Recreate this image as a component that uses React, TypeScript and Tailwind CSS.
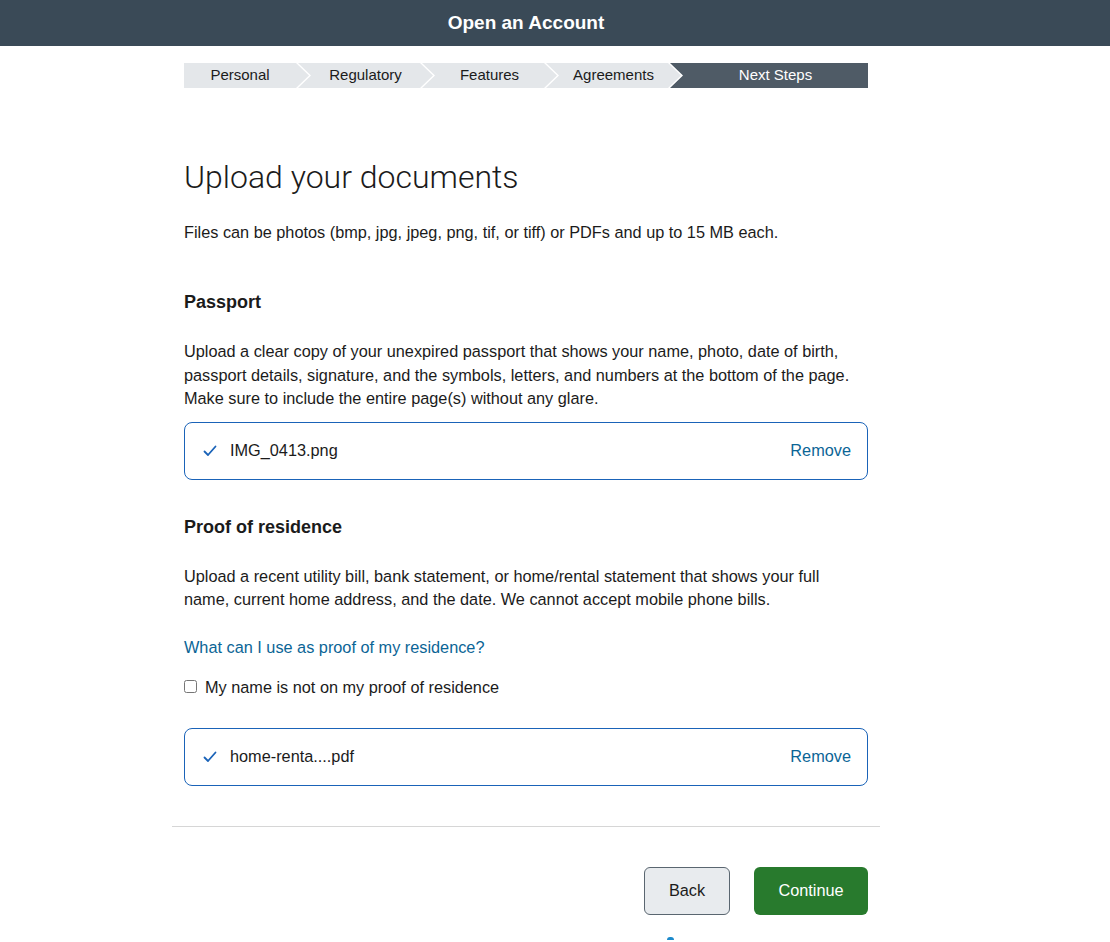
import React from "react";

const steps = ["Personal", "Regulatory", "Features", "Agreements", "Next Steps"];

// Arrow-shaped stepper segments
const Stepper = () => {
  return (
    <div className="flex h-[25px] w-full pt-[1px] text-[15px]">
      {steps.map((label, i) => {
        const first = i === 0;
        const last = i === steps.length - 1;
        const clip = first
          ? "[clip-path:polygon(0_0,calc(100%-13px)_0,100%_50%,calc(100%-13px)_100%,0_100%)]"
          : last
            ? "[clip-path:polygon(0_0,100%_0,100%_100%,0_100%,13px_50%)]"
            : "[clip-path:polygon(0_0,calc(100%-13px)_0,100%_50%,calc(100%-13px)_100%,0_100%,13px_50%)]";
        return (
          <div
            key={label}
            className={`flex h-[25px] items-center justify-center ${clip} ${
              first ? "w-[125px] pr-[13px]" : last ? "-ml-[11px] flex-1 pl-[13px]" : "-ml-[11px] w-[135px] px-[13px]"
            } ${last ? "bg-[#4f5b66] text-white" : "bg-[#e4e7ea] text-[#1b1b1b]"}`}
          >
            {label}
          </div>
        );
      })}
    </div>
  );
};

const Check = () => (
  <svg width="14" height="12" viewBox="0 0 14 12" fill="none">
    <path d="M1.5 6.5 L5 10 L12.5 1.5" stroke="#1a63b8" strokeWidth="1.8" strokeLinecap="round" strokeLinejoin="round" />
  </svg>
);

const FileRow = ({ name }: { name: string }) => (
  <div className="flex h-[58px] items-center rounded-[8px] border border-[#1a63b8] pl-[18px] pr-[16px]">
    <Check />
    <span className="ml-[13px] flex-1 text-[16.3px] text-[#1b1b1b]">{name}</span>
    <button className="text-[16.3px] text-[#0b6596]">Remove</button>
  </div>
);

export default function App() {
  return (
    <div className="min-h-[942px] bg-white font-['Liberation_Sans',Arial,sans-serif] text-[#1b1b1b]">
      <header className="h-[46px] bg-[#3a4a57]">
        <div className="flex h-full w-[1052px] items-center justify-center">
          <h1 className="text-[19px] font-bold text-white">Open an Account</h1>
        </div>
      </header>

      <div className="w-[1052px]">
        <div className="mx-auto w-[684px] pt-[16px] text-[16.3px]">
          <Stepper />

          <h2 className="mt-[70px] font-['Roboto',sans-serif] text-[32px] font-light leading-[40px] text-[#1b1b1b]">
            Upload your documents
          </h2>
          <p className="mt-[24px] leading-[22px]">
            Files can be photos (bmp, jpg, jpeg, png, tif, or tiff) or PDFs and up to 15 MB each.
          </p>

          <h3 className="mt-[47px] text-[18px] font-bold leading-[24px]">Passport</h3>
          <p className="mt-[26px] leading-[23.5px]">
            Upload a clear copy of your unexpired passport that shows your name, photo, date of birth,
            passport details, signature, and the symbols, letters, and numbers at the bottom of the page.
            Make sure to include the entire page(s) without any glare.
          </p>
          <div className="mt-[11px]">
            <FileRow name="IMG_0413.png" />
          </div>

          <h3 className="mt-[35px] text-[18px] font-bold leading-[24px]">Proof of residence</h3>
          <p className="mt-[26px] leading-[23.5px]">
            Upload a recent utility bill, bank statement, or home/rental statement that shows your full
            name, current home address, and the date. We cannot accept mobile phone bills.
          </p>
          <a className="mt-[24px] block leading-[22px] text-[#0b6596]" href="#">
            What can I use as proof of my residence?
          </a>
          <label className="mt-[18px] flex items-center gap-[8px] leading-[22px]">
            <input type="checkbox" className="h-[13px] w-[13px]" />
            My name is not on my proof of residence
          </label>
          <div className="mt-[30px]">
            <FileRow name="home-renta....pdf" />
          </div>
        </div>

        <div className="mx-auto mt-[40px] w-[708px] border-t border-[#d6d6d6]" />

        <div className="mx-auto flex w-[684px] justify-end gap-[24px] pt-[40px]">
          <button className="h-[48px] w-[86px] rounded-[6px] border border-[#5a6670] bg-[#e8ebee] text-[16.3px] text-[#1b1b1b]">
            Back
          </button>
          <button className="h-[48px] w-[114px] rounded-[6px] bg-[#287a2d] text-[16.3px] text-white">
            Continue
          </button>
        </div>
        <div className="mx-auto flex w-[684px] pt-[22px] pl-[483px]">
          <div className="h-[3px] w-[7px] rounded-t-full bg-[#1c8acb]" />
        </div>
      </div>
    </div>
  );
}
